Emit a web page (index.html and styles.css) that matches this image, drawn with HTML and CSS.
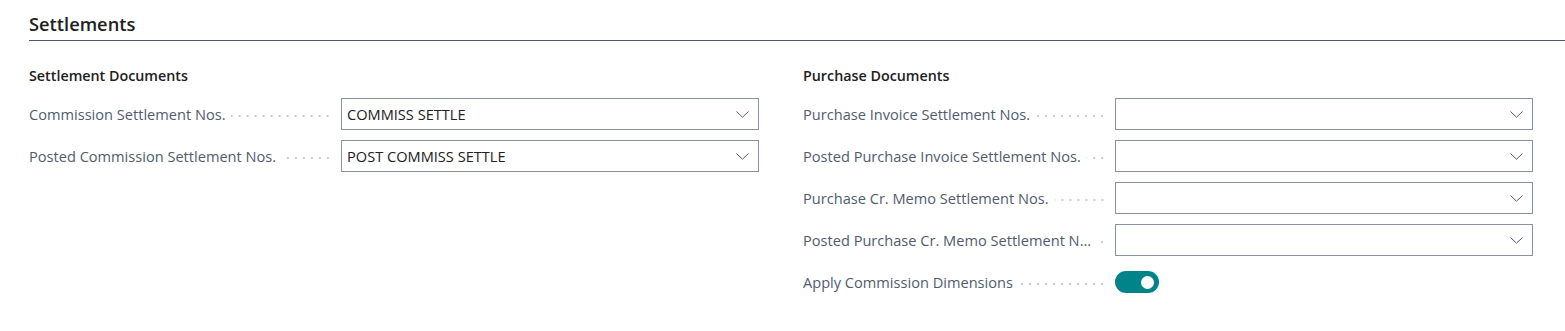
FILE: index.html
```html
<!DOCTYPE html>
<html>
  <head>
    <meta charset="utf-8" />
    <meta name="viewport" content="width=device-width, initial-scale=1.0" />
    <title>Settlements</title>
    <link rel="stylesheet" href="styles.css">
  </head>
  <body>
    <div class="page">
      <div class="section-head">
        <h2>Settlements</h2>
      </div>

      <div class="columns">
        <div class="group">
          <h3>Settlement Documents</h3>
          <div class="field">
            <div class="caption"><span class="label">Commission Settlement Nos.</span><span class="leader"></span></div>
            <div class="select">
              <span class="value">COMMISS SETTLE</span>
              <svg class="chevron" width="13" height="7" viewBox="0 0 13 7"><path d="M0.5 0.5 L6.5 6.2 L12.5 0.5" fill="none" stroke="#5a5a5a" stroke-width="1"/></svg>
            </div>
          </div>
          <div class="field">
            <div class="caption"><span class="label">Posted Commission Settlement Nos.</span><span class="leader"></span></div>
            <div class="select">
              <span class="value">POST COMMISS SETTLE</span>
              <svg class="chevron" width="13" height="7" viewBox="0 0 13 7"><path d="M0.5 0.5 L6.5 6.2 L12.5 0.5" fill="none" stroke="#5a5a5a" stroke-width="1"/></svg>
            </div>
          </div>
        </div>

        <div class="group">
          <h3>Purchase Documents</h3>
          <div class="field">
            <div class="caption"><span class="label">Purchase Invoice Settlement Nos.</span><span class="leader"></span></div>
            <div class="select">
              <span class="value"></span>
              <svg class="chevron" width="13" height="7" viewBox="0 0 13 7"><path d="M0.5 0.5 L6.5 6.2 L12.5 0.5" fill="none" stroke="#5a5a5a" stroke-width="1"/></svg>
            </div>
          </div>
          <div class="field">
            <div class="caption"><span class="label">Posted Purchase Invoice Settlement Nos.</span><span class="leader"></span></div>
            <div class="select">
              <span class="value"></span>
              <svg class="chevron" width="13" height="7" viewBox="0 0 13 7"><path d="M0.5 0.5 L6.5 6.2 L12.5 0.5" fill="none" stroke="#5a5a5a" stroke-width="1"/></svg>
            </div>
          </div>
          <div class="field">
            <div class="caption"><span class="label">Purchase Cr. Memo Settlement Nos.</span><span class="leader"></span></div>
            <div class="select">
              <span class="value"></span>
              <svg class="chevron" width="13" height="7" viewBox="0 0 13 7"><path d="M0.5 0.5 L6.5 6.2 L12.5 0.5" fill="none" stroke="#5a5a5a" stroke-width="1"/></svg>
            </div>
          </div>
          <div class="field">
            <div class="caption"><span class="label">Posted Purchase Cr. Memo Settlement Nos.</span><span class="leader"></span></div>
            <div class="select">
              <span class="value"></span>
              <svg class="chevron" width="13" height="7" viewBox="0 0 13 7"><path d="M0.5 0.5 L6.5 6.2 L12.5 0.5" fill="none" stroke="#5a5a5a" stroke-width="1"/></svg>
            </div>
          </div>
          <div class="field">
            <div class="caption"><span class="label">Apply Commission Dimensions</span><span class="leader"></span></div>
            <div class="switch-wrap">
              <span class="switch on"><span class="knob"></span></span>
            </div>
          </div>
        </div>
      </div>
    </div>
  </body>
</html>
```

FILE: styles.css
```css
body {
  margin: 0;
  padding: 0;
  background: #fff;
  color: #212121;
  font-family: "Open Sans", "Noto Sans", sans-serif;
  font-size: 14.6px;
}

.page {
  padding: 0 0 0 29px;
}

.section-head {
  border-bottom: 1px solid #4f5b6b;
  box-sizing: border-box;
  height: 41px;
  padding-top: 12px;
}

.section-head h2 {
  margin: 0;
  font-size: 18.3px;
  line-height: 24px;
  font-weight: 600;
  color: #212121;
}

.columns {
  display: grid;
  grid-template-columns: 1fr 1fr;
  column-gap: 44px;
  padding-right: 32px;
}

.group h3 {
  margin: 25px 0 12px 0;
  font-size: 14.3px;
  line-height: 20px;
  font-weight: 600;
  color: #212121;
}

.field {
  display: flex;
  align-items: center;
  height: 32px;
  margin-bottom: 10px;
}

.caption {
  flex: 0 0 312px;
  display: flex;
  align-items: center;
  min-width: 0;
}

.label {
  white-space: nowrap;
  overflow: hidden;
  text-overflow: ellipsis;
  color: #505c6d;
  line-height: 20px;
}

.leader {
  flex: 1 0 5px;
  height: 4px;
  margin: 3px 9px 0 6px;
  background-image: radial-gradient(circle, #cdcdcd 0.9px, transparent 1.3px);
  background-size: 8px 4px;
  background-repeat: repeat-x;
  background-position: right center;
}

.select {
  flex: 1;
  height: 32px;
  box-sizing: border-box;
  border: 1px solid #8b93a1;
  display: flex;
  align-items: center;
  padding: 0 9px 0 5px;
}

.select .value {
  flex: 1;
  color: #212121;
}

.chevron {
  display: block;
}

.switch-wrap {
  flex: 1;
  display: flex;
  align-items: center;
}

.switch {
  width: 44px;
  height: 22px;
  border-radius: 11px;
  background: #00848a;
  display: flex;
  align-items: center;
  justify-content: flex-end;
  padding: 0 5px;
  box-sizing: border-box;
}

.knob {
  width: 13px;
  height: 13px;
  border-radius: 50%;
  background: #fff;
}
```
